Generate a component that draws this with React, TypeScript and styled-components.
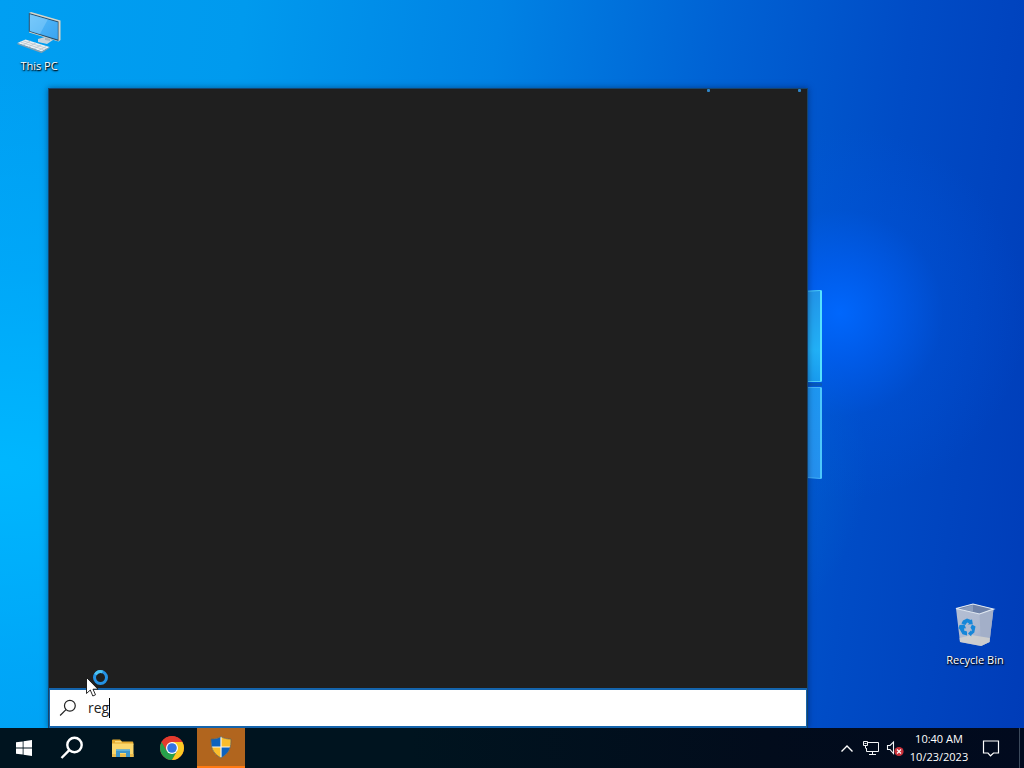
import React from "react";
import styled, { createGlobalStyle } from "styled-components";

const GlobalStyle = createGlobalStyle`
  *, *::before, *::after { box-sizing: border-box; }
  body {
    margin: 0;
    font-family: "Open Sans", "Noto Sans", sans-serif;
    font-size: 11px;
    color: #fff;
  }
  button { font: inherit; color: inherit; }
`;

const Screen = styled.div`
  min-height: 100vh;
  display: flex;
  flex-direction: column;
`;

const Desktop = styled.main`
  position: relative;
  flex: 1;
  display: flex;
  justify-content: space-between;
  overflow: hidden;
  background:
    radial-gradient(circle at 82% 43%, rgba(0, 104, 255, 0.95) 0, rgba(0, 98, 250, 0.65) 5%, rgba(0, 88, 230, 0.25) 11%, rgba(0, 80, 215, 0) 20%),
    radial-gradient(ellipse at 0% 64%, rgba(0, 184, 255, 0.95) 0, rgba(0, 176, 255, 0.5) 30%, rgba(0, 170, 255, 0) 60%),
    linear-gradient(97deg, #009ff2 0%, #009aee 22%, #0082e4 45%, #0062d4 65%, #004cc6 82%, #003cb8 100%);
`;

const Wallpaper = styled.svg`
  position: absolute;
  left: 800px;
  top: 284px;
`;

const Shortcut = styled.button<{ $end?: boolean }>`
  align-self: ${(p) => (p.$end ? "flex-end" : "flex-start")};
  width: 76px;
  margin: ${(p) => (p.$end ? "0 11px 60px 0" : "8px 0 0 1px")};
  padding: 0;
  border: 0;
  background: none;
  display: flex;
  flex-direction: column;
  align-items: center;
  gap: 2px;
  font-weight: 500;
  line-height: 16px;
  text-shadow: 0 1px 2px #000, 1px 1px 1px rgba(0, 0, 0, 0.8);
`;

const SearchPanel = styled.section`
  position: absolute;
  left: 48px;
  top: 88px;
  bottom: 0;
  width: min(760px, calc(100% - 48px));
  display: flex;
  flex-direction: column;
  background: #1f1f1f;
  border: 1px solid #17436b;
  border-bottom: 0;
  box-shadow: 0 0 6px rgba(0, 20, 60, 0.5);
`;

const Progress = styled.div`
  height: 3px;
  display: flex;
  justify-content: flex-end;
  gap: 88px;
  padding-right: 6px;
`;

const ProgressDot = styled.span`
  width: 3px;
  height: 3px;
  border-radius: 1px;
  background: #2f86c8;
`;

const Results = styled.div`
  flex: 1;
`;

const SearchBox = styled.label`
  height: 40px;
  display: flex;
  align-items: center;
  gap: 11px;
  padding-left: 9px;
  background: #fff;
  border: solid #1464ac;
  border-width: 2px 1px;
  cursor: text;
`;

const Field = styled.span`
  display: flex;
  align-items: center;
`;

const SearchInput = styled.input`
  field-sizing: content;
  padding: 0;
  border: 0;
  outline: 0;
  background: none;
  font-family: inherit;
  font-size: 14px;
  line-height: 20px;
  color: #222;
  caret-color: transparent;
`;

const Caret = styled.span`
  width: 1px;
  height: 20px;
  background: #000;
`;

const Pointer = styled.svg`
  position: absolute;
  left: 84px;
  top: 668px;
  pointer-events: none;
`;

const Taskbar = styled.footer`
  height: 40px;
  display: flex;
  justify-content: space-between;
  background: linear-gradient(90deg, #00141f 0%, #00141f 40%, #020c1c 75%, #010a1e 100%);
`;

const Group = styled.nav`
  display: flex;
`;

const Apps = styled.div`
  display: flex;
  gap: 1px;
  padding-left: 3px;
`;

const TaskButton = styled.button<{ $alert?: boolean }>`
  width: 48px;
  height: 40px;
  padding: 0;
  border: 0;
  border-bottom: ${(p) => (p.$alert ? "2px solid #ff7a14" : "0")};
  background: ${(p) => (p.$alert ? "#b1651e" : "none")};
  display: flex;
  align-items: center;
  justify-content: center;
`;

const TrayButton = styled.button<{ $wide?: boolean }>`
  width: ${(p) => (p.$wide ? "40px" : "24px")};
  padding: 0;
  border: 0;
  background: none;
  display: flex;
  align-items: center;
  justify-content: center;
`;

const Clock = styled.button`
  width: 64px;
  padding: 2px 0;
  border: 0;
  background: none;
  line-height: 18px;
  text-align: center;
  white-space: nowrap;
`;

const Line = styled.span`
  display: block;
`;

const ShowDesktop = styled.button`
  width: 5px;
  margin-left: 8px;
  padding: 0;
  border: 0;
  border-left: 1px solid #3c4a5c;
  background: none;
`;

const ComputerIcon = () => (
  <svg width="48" height="48" viewBox="0 0 48 48" aria-hidden="true">
    <defs>
      <linearGradient id="display" x1="0" y1="0" x2="1" y2="1">
        <stop offset="0" stopColor="#62bff8" />
        <stop offset=".5" stopColor="#49b0f5" />
        <stop offset="1" stopColor="#3aa4f0" />
      </linearGradient>
    </defs>
    <path d="M23 31l7-2 8 3-6 4-9-2z" fill="#c7d3dc" />
    <path d="M30 26l5 2v5l-5-1z" fill="#a5b5c0" />
    <path d="M14 5l2-1 29.500 8.500v19.500l-2 1.500-29.500-9z" fill="#d9d6c8" />
    <path d="M13.800 5l29.700 8.500V33l-29.700-9.500z" fill="#244a68" />
    <path d="M14.800 6.200l28 8v17.400l-28-8.700z" fill="url(#display)" />
    <path d="M14.800 6.200l18 5.200-8 14.800-10-3.200z" fill="#a4dcff" opacity=".35" />
    <path d="M2.500 35l8-3.500 24 7.500-8 4.500z" fill="#edf1f3" />
    <path d="M2.500 35l24 8.500 8-4.500v1L26.500 45l-24-8.700z" fill="#8a9eac" />
    <path d="M5.500 34l23 7.600M8 32.700l23 7.500M8 37l7.500-4M13.500 38.800l7.500-4M19 40.700l7.500-4M24 42.300l7.500-4" stroke="#b7c4cd" strokeWidth=".8" />
  </svg>
);

const RecycleIcon = () => (
  <svg width="48" height="48" viewBox="0 0 48 48" aria-hidden="true">
    <defs>
      <linearGradient id="bin" x1="0" y1="0" x2="1" y2="1">
        <stop offset="0" stopColor="#b4bfd4" />
        <stop offset=".6" stopColor="#aeb9d0" />
        <stop offset="1" stopColor="#8b9dc6" />
      </linearGradient>
    </defs>
    <path d="M5 6.500L22 2l20.500 5L38.500 40 30 44 9 40z" fill="url(#bin)" />
    <path d="M5 6.500L22 2l20.500 5L28.500 12z" fill="#6f82a8" />
    <path d="M9 7l13-4v6.500z" fill="#8b9dbd" />
    <path d="M28.500 12L42.500 7 38.500 40 30 44z" fill="#a3afc8" />
    <path d="M8.500 36l12-3 18.300 3-.3 4L30 44 9 40z" fill="#d8d6cf" opacity=".75" />
    <path d="M5 6.500L22 2l20.500 5L28.500 12z" fill="none" stroke="#dfe7f1" strokeWidth="1.200" />
    <g fill="#1687d9">
      <path d="M12 18.500l4-2 4 1.500 1-.8.8 5-5 .3 1.300-1.300-2-.7-1.700 2.500-4-1.500z" />
      <path d="M8.500 23l5-.5 1.500 4-1.500-.5-.5 2.500 3 1v4l-4.500-1.300L8.500 27l-1-.7z" />
      <path d="M21 22.500l3.500 2-1.200 6-3 2.500v1.500L17 31.500l3.300-3.500v1.500l.9-1-1.700-3z" />
    </g>
  </svg>
);

const WindowsIcon = () => (
  <svg width="16" height="16" viewBox="0 0 16 16" fill="#fff" aria-hidden="true">
    <path d="M0 2.300L6.700 1.400v6.200H0zM7.500 1.300L16 0v7.600H7.500zM0 8.400h6.700v6.200L0 13.700zM7.500 8.400H16V16l-8.500-1.200z" />
  </svg>
);

const Magnifier = ({ size, weight, color }: { size: number; weight: number; color: string }) => (
  <svg width={size} height={size} viewBox="0 0 24 24" fill="none" stroke={color} strokeWidth={weight} aria-hidden="true">
    <circle cx="14.500" cy="9" r="7.200" />
    <path d="M9.300 14.200L1.500 22" />
  </svg>
);

const FolderIcon = () => (
  <svg width="24" height="24" viewBox="0 0 24 24" aria-hidden="true">
    <path d="M1 4.500q0-1 1-1h7l2 2h10.500q.8 0 .8 1V9H1z" fill="#e4a92e" />
    <path d="M4 5h6l1 1.500H4z" fill="#f8db7d" />
    <path d="M1 7.500h21.500V21H1z" fill="#fbd76c" />
    <path d="M1 18h21.500v3H1z" fill="#edbc4b" />
    <path d="M5 13.500h14V21h-4v-4H9v4H5z" fill="#3f96ca" />
    <path d="M5 13.500h14V15H5z" fill="#5eb1dc" />
  </svg>
);

const ChromeIcon = () => (
  <svg width="24" height="24" viewBox="0 0 24 24" aria-hidden="true">
    <circle cx="12" cy="12" r="12" fill="#e33b2e" />
    <path d="M1.610 6A12 12 0 0 0 12 24l5.200-9L12 12z" fill="#27a04b" />
    <path d="M22.390 6A12 12 0 0 1 12 24l5.200-9L12 6z" fill="#fcca24" />
    <path d="M1.610 6A12 12 0 0 1 22.390 6H12L6.800 15z" fill="#e33b2e" />
    <circle cx="12" cy="12" r="6" fill="#fff" />
    <circle cx="12" cy="12" r="4.800" fill="#3274e4" />
  </svg>
);

const ShieldIcon = () => (
  <svg width="22" height="24" viewBox="0 0 22 24" aria-hidden="true">
    <defs>
      <clipPath id="shield">
        <path d="M11 1.500C8.500 3.500 4.500 4 1 4c0 8 1 14 10 19 9-5 10-11 10-19-3.500 0-7.500-.5-10-2.500z" />
      </clipPath>
    </defs>
    <g clipPath="url(#shield)">
      <path d="M0 0h22v24H0z" fill="#f8f6ee" />
      <path d="M0 0h10.400v11.400H0z" fill="#0e62bd" />
      <path d="M11.600 0H22v11.400H11.600z" fill="#fbbd2c" />
      <path d="M0 12.600h10.400V24H0z" fill="#fbbd2c" />
      <path d="M11.600 12.600H22V24H11.600z" fill="#0e62bd" />
    </g>
    <path d="M11 1.500C8.500 3.500 4.500 4 1 4c0 8 1 14 10 19 9-5 10-11 10-19-3.500 0-7.500-.5-10-2.500z" fill="none" stroke="#6b6350" strokeWidth=".8" />
  </svg>
);

const ChevronIcon = () => (
  <svg width="14" height="10" viewBox="0 0 14 10" fill="none" stroke="#fff" strokeWidth="1.400" aria-hidden="true">
    <path d="M1.500 8.500L7 3l5.500 5.500" />
  </svg>
);

const NetworkIcon = () => (
  <svg width="18" height="16" viewBox="0 0 18 16" fill="none" stroke="#f2f4f6" aria-hidden="true">
    <path d="M5.500 2.500h11v9H4.500M10.500 11.500v3M7 14.500h7M1.500 1.500h4v4h-4zM3.500 5.500v3M4.500 8v3.500M2.500 3.500h2" />
  </svg>
);

const VolumeIcon = () => (
  <svg width="18" height="18" viewBox="0 0 18 18" aria-hidden="true">
    <path d="M1.500 6.500h2.500l3.500-3.500v11.500l-3.500-4H1.500z" fill="none" stroke="#f2f4f6" strokeWidth="1.100" />
    <circle cx="13" cy="12.500" r="4.600" fill="#c9303a" />
    <path d="M11 10.500l4 4M15 10.500l-4 4" stroke="#fff" strokeWidth="1.100" />
  </svg>
);

const NoticeIcon = () => (
  <svg width="18" height="18" viewBox="0 0 18 18" fill="none" stroke="#fff" strokeWidth="1.200" aria-hidden="true">
    <path d="M1.500 2h15v12h-5L8.500 16.800 6 14H1.500z" />
  </svg>
);

export default function App() {
  return (
    <Screen>
      <GlobalStyle />
      <Desktop>
        <Wallpaper width="26" height="200" viewBox="0 0 26 200" aria-hidden="true">
          <defs>
            <linearGradient id="upperPane" x1="0" y1="0" x2="0" y2="1">
              <stop offset="0" stopColor="#2295e8" />
              <stop offset=".65" stopColor="#22b0f6" />
              <stop offset="1" stopColor="#189bee" />
            </linearGradient>
            <linearGradient id="lowerPane" x1="0" y1="0" x2="0" y2="1">
              <stop offset="0" stopColor="#1e96f0" />
              <stop offset="1" stopColor="#2590ee" />
            </linearGradient>
          </defs>
          <path d="M0 7.500L21 6.500v91H0z" fill="url(#upperPane)" stroke="#4ccdf8" />
          <path d="M21 6.500v91" stroke="#55e2ff" strokeWidth="2" />
          <path d="M0 99h22v3H0z" fill="#0759b9" />
          <path d="M0 103.500h21v91L0 193z" fill="url(#lowerPane)" stroke="#45b3f6" />
          <path d="M21 103.500v91" stroke="#4cc8fc" strokeWidth="2" />
        </Wallpaper>
        <Shortcut>
          <ComputerIcon />
          This PC
        </Shortcut>
        <Shortcut $end>
          <RecycleIcon />
          Recycle Bin
        </Shortcut>
        <SearchPanel aria-label="Search">
          <Progress aria-hidden="true">
            <ProgressDot />
            <ProgressDot />
          </Progress>
          <Results />
          <SearchBox>
            <Magnifier size={18} weight={1.6} color="#222" />
            <Field>
              <SearchInput aria-label="Search" defaultValue="reg" />
              <Caret />
            </Field>
          </SearchBox>
        </SearchPanel>
        <Pointer width="28" height="32" viewBox="0 0 28 32" aria-hidden="true">
          <circle cx="16.500" cy="9.500" r="6" fill="none" stroke="#2492e4" strokeWidth="3" />
          <path d="M11.500 6.500a6 6 0 0 1 7-2.600" fill="none" stroke="#4cc3f4" strokeWidth="3" />
          <path d="M2.500 9.500v16l3.800-3.500 2.500 6 2.700-1.200-2.500-5.600h5z" fill="#fff" stroke="#111" strokeWidth=".9" />
        </Pointer>
      </Desktop>
      <Taskbar>
        <Group aria-label="Taskbar">
          <TaskButton aria-label="Start">
            <WindowsIcon />
          </TaskButton>
          <TaskButton aria-label="Search">
            <Magnifier size={24} weight={2.4} color="#fff" />
          </TaskButton>
          <Apps>
            <TaskButton aria-label="File Explorer">
              <FolderIcon />
            </TaskButton>
            <TaskButton aria-label="Google Chrome">
              <ChromeIcon />
            </TaskButton>
            <TaskButton $alert aria-label="User Account Control">
              <ShieldIcon />
            </TaskButton>
          </Apps>
        </Group>
        <Group aria-label="System tray">
          <TrayButton aria-label="Show hidden icons">
            <ChevronIcon />
          </TrayButton>
          <TrayButton aria-label="Network">
            <NetworkIcon />
          </TrayButton>
          <TrayButton aria-label="Volume">
            <VolumeIcon />
          </TrayButton>
          <Clock>
            <Line>10:40 AM</Line>
            <Line>10/23/2023</Line>
          </Clock>
          <TrayButton $wide aria-label="Notifications">
            <NoticeIcon />
          </TrayButton>
          <ShowDesktop aria-label="Show desktop" />
        </Group>
      </Taskbar>
    </Screen>
  );
}
